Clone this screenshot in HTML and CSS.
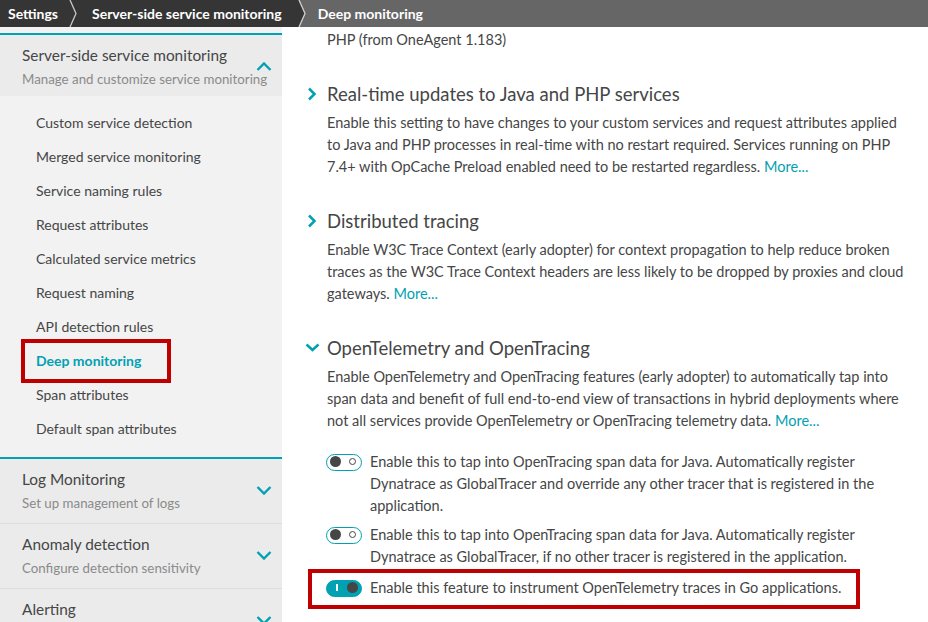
FILE: index.html
```html
<!DOCTYPE html>
<html lang="en">
<head>
<meta charset="utf-8">
<title>Deep monitoring</title>
<link rel="stylesheet" href="styles.css">
</head>
<body>
<nav class="crumbs">
  <span class="crumb">Settings</span>
  <svg class="sep" width="14" height="27" viewBox="0 0 14 27"><polyline points="4,0 10,13.5 4,27" fill="none" stroke="#c8c8c8" stroke-width="1.3"/></svg>
  <span class="crumb mid">Server-side service monitoring</span>
  <svg class="sep sep-cur" width="14" height="27" viewBox="0 0 14 27"><polygon points="0,0 7,0 13,13.5 7,27 0,27" fill="#353535"/><polyline points="7,0 13,13.5 7,27" fill="none" stroke="#d0d0d0" stroke-width="1.3"/></svg>
  <span class="crumb current">Deep monitoring</span>
</nav>
<div class="layout">
  <aside class="sidebar">
    <section class="group open">
      <header class="group-head">
        <div class="group-text">
          <div class="group-title">Server-side service monitoring</div>
          <div class="group-sub">Manage and customize service monitoring</div>
        </div>
        <svg class="group-chev" width="16" height="9" viewBox="0 0 16 9"><polyline points="1.5,8 8,1.5 14.5,8" fill="none" stroke="#00a1b2" stroke-width="2.4"/></svg>
      </header>
      <ul class="submenu">
        <li>Custom service detection</li>
        <li>Merged service monitoring</li>
        <li>Service naming rules</li>
        <li>Request attributes</li>
        <li>Calculated service metrics</li>
        <li>Request naming</li>
        <li>API detection rules</li>
        <li class="active">Deep monitoring</li>
        <li>Span attributes</li>
        <li>Default span attributes</li>
      </ul>
    </section>
    <section class="group first-closed">
      <header class="group-head">
        <div class="group-text">
          <div class="group-title">Log Monitoring</div>
          <div class="group-sub">Set up management of logs</div>
        </div>
        <svg class="group-chev" width="16" height="9" viewBox="0 0 16 9"><polyline points="1.5,1 8,7.5 14.5,1" fill="none" stroke="#00a1b2" stroke-width="2.4"/></svg>
      </header>
    </section>
    <section class="group">
      <header class="group-head">
        <div class="group-text">
          <div class="group-title">Anomaly detection</div>
          <div class="group-sub">Configure detection sensitivity</div>
        </div>
        <svg class="group-chev" width="16" height="9" viewBox="0 0 16 9"><polyline points="1.5,1 8,7.5 14.5,1" fill="none" stroke="#00a1b2" stroke-width="2.4"/></svg>
      </header>
    </section>
    <section class="group">
      <header class="group-head">
        <div class="group-text">
          <div class="group-title">Alerting</div>
          <div class="group-sub">Configure alerting profiles</div>
        </div>
        <svg class="group-chev" width="16" height="9" viewBox="0 0 16 9"><polyline points="1.5,1 8,7.5 14.5,1" fill="none" stroke="#00a1b2" stroke-width="2.4"/></svg>
      </header>
    </section>
  </aside>
  <main class="content">
    <p class="text">PHP (from OneAgent 1.183)</p>

    <h2 class="heading"><span class="hicon"><svg width="22" height="24" viewBox="0 0 22 24"><polyline points="4,6.5 9.5,12 4,17.5" fill="none" stroke="#00a1b2" stroke-width="2.5"/></svg></span>Real-time updates to Java and PHP services</h2>
    <p class="text desc">Enable this setting to have changes to your custom services and request attributes applied to Java and PHP processes in real-time with no restart required. Services running on PHP 7.4+ with OpCache Preload enabled need to be restarted regardless. <a class="more" href="#">More...</a></p>

    <h2 class="heading"><span class="hicon"><svg width="22" height="24" viewBox="0 0 22 24"><polyline points="4,6.5 9.5,12 4,17.5" fill="none" stroke="#00a1b2" stroke-width="2.5"/></svg></span>Distributed tracing</h2>
    <p class="text desc">Enable W3C Trace Context (early adopter) for context propagation to help reduce broken traces as the W3C Trace Context headers are less likely to be dropped by proxies and cloud gateways. <a class="more" href="#">More...</a></p>

    <h2 class="heading"><span class="hicon"><svg width="22" height="24" viewBox="0 0 22 24"><polyline points="1.5,8.5 7.5,14 13.5,8.5" fill="none" stroke="#00a1b2" stroke-width="2.5"/></svg></span>OpenTelemetry and OpenTracing</h2>
    <p class="text desc">Enable OpenTelemetry and OpenTracing features (early adopter) to automatically tap into span data and benefit of full end-to-end view of transactions in hybrid deployments where not all services provide OpenTelemetry or OpenTracing telemetry data. <a class="more" href="#">More...</a></p>

    <div class="options">
      <div class="option">
        <span class="toggle"></span>
        <span class="text">Enable this to tap into OpenTracing span data for Java. Automatically register Dynatrace as GlobalTracer and override any other tracer that is registered in the application.</span>
      </div>
      <div class="option">
        <span class="toggle"></span>
        <span class="text">Enable this to tap into OpenTracing span data for Java. Automatically register Dynatrace as GlobalTracer, if no other tracer is registered in the application.</span>
      </div>
      <div class="option marked">
        <span class="toggle on"></span>
        <span class="text">Enable this feature to instrument OpenTelemetry traces in Go applications.</span>
      </div>
    </div>
  </main>
</div>
</body>
</html>
```
FILE: styles.css
```css
*, *::before, *::after { box-sizing: border-box; }
html, body { margin: 0; padding: 0; }
body {
  width: 928px;
  height: 622px;
  overflow: hidden;
  font-family: Lato, "Liberation Sans", sans-serif;
  color: #454646;
  background: #ffffff;
}

/* breadcrumb */
.crumbs {
  display: flex;
  height: 27px;
  background: #353535;
  color: #ffffff;
  font-size: 14px;
  font-weight: 700;
  line-height: 27px;
}
.crumb { white-space: nowrap; }
.crumb:first-child { padding-left: 8px; padding-right: 8px; }
.crumb.mid { padding-left: 12px; padding-right: 10px; }
.sep { display: block; flex: none; }
.sep-cur { background: #666666; }
.crumb.current {
  flex: 1;
  background: #666666;
  padding-left: 12px;
}

/* layout */
.layout {
  display: flex;
  height: 595px;
}
.sidebar {
  width: 282px;
  flex: none;
  background: #f2f2f2;
  padding-top: 6px;
  overflow: hidden;
}

.group { border-top: 2px solid #00a1b2; }
.group + .group:not(.first-closed) { border-top: none; }
.group-head {
  display: flex;
  align-items: center;
  background: #ebebeb;
  padding: 9px 10px 10px 22px;
  border-bottom: 1px solid #dddddd;
}
.group.open .group-head { border-bottom: none; padding-bottom: 7px; }
.group-text { flex: 1; min-width: 0; }
.group-title {
  font-size: 15.4px;
  line-height: 22px;
  color: #454646;
}
.group-sub {
  margin-top: 3px;
  font-size: 13.3px;
  line-height: 20px;
  color: #8a8a8a;
  white-space: nowrap;
}
.group-chev { display: block; flex: none; }

.submenu {
  list-style: none;
  margin: 0;
  padding: 10px 0 11px 36px;
}
.submenu li {
  font-size: 14px;
  line-height: 34px;
  height: 34px;
  color: #454646;
}
.submenu li.active {
  position: relative;
  color: #00a1b2;
  font-weight: 700;
}
.submenu li.active::after {
  content: "";
  position: absolute;
  left: -15px;
  top: -5px;
  width: 150px;
  height: 44px;
  border: 4px solid #c00000;
}

/* content */
.content {
  flex: 1;
  padding: 2px 17px 0 45px;
  overflow: hidden;
}
.text {
  font-size: 14.5px;
  line-height: 22px;
  margin: 0;
}
.heading {
  display: flex;
  align-items: center;
  margin: 31px 0 0 -22px;
  font-size: 18.5px;
  font-weight: 400;
  line-height: 24px;
  color: #454646;
}
.hicon { display: flex; width: 22px; flex: none; }
.hicon svg { display: block; }
.desc { margin-top: 6px; }
.more { color: #00a1b2; text-decoration: none; }

.options { margin-top: 19px; }
.option {
  display: flex;
  align-items: flex-start;
  gap: 8px;
  margin-left: -1px;
}
.option + .option { margin-top: 7px; }
.option.marked { position: relative; margin-top: 9px; }
.option.marked::after {
  content: "";
  position: absolute;
  left: -18px;
  top: -8px;
  width: 552px;
  height: 40px;
  border: 4px solid #c00000;
}

.toggle {
  position: relative;
  flex: none;
  width: 36px;
  height: 17px;
  margin-top: 2.5px;
  border: 1.5px solid #00a1b2;
  border-radius: 9px;
  background: #ffffff;
}
.toggle::before {
  content: "";
  position: absolute;
  left: 3px;
  top: 1.5px;
  width: 11px;
  height: 11px;
  border-radius: 50%;
  background: #454646;
}
.toggle::after {
  content: "";
  position: absolute;
  right: 5px;
  top: 3.5px;
  width: 7px;
  height: 7px;
  border-radius: 50%;
  border: 1.2px solid #454646;
}
.toggle.on { background: #00a1b2; }
.toggle.on::before { left: auto; right: 3px; }
.toggle.on::after {
  right: auto;
  left: 9px;
  top: 3.5px;
  width: 1.5px;
  height: 7px;
  border: none;
  border-radius: 0;
  background: #ffffff;
}
```
